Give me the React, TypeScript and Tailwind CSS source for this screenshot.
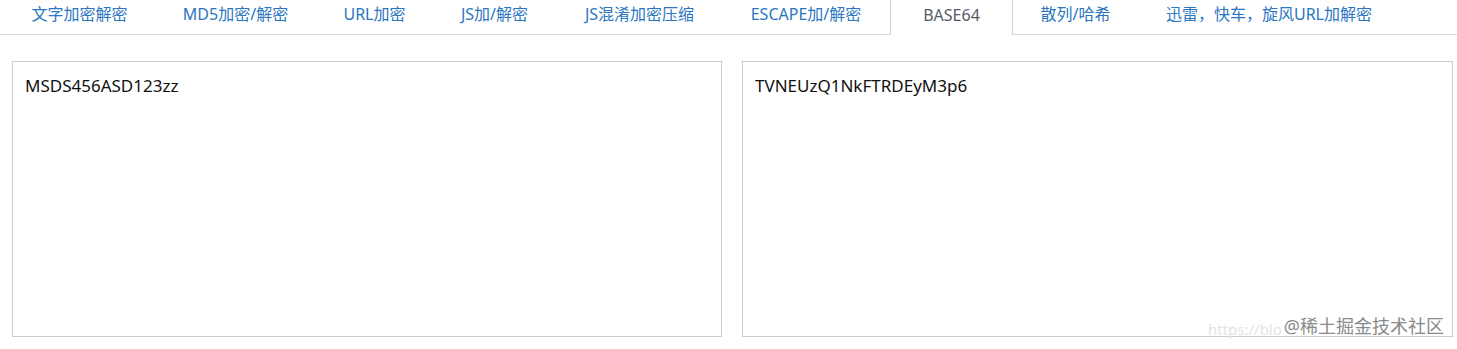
import { useState } from 'react'

const tabs = [
    { label: '文字加密解密', w: 'w-[149px]' },
    { label: 'MD5加密/解密', w: 'w-[163px]' },
    { label: 'URL加密', w: 'w-[115px]' },
    { label: 'JS加/解密', w: 'w-[125px]' },
    { label: 'JS混淆加密压缩', w: 'w-[165px]' },
    { label: 'ESCAPE加/解密', w: 'w-[168px]' },
    { label: 'BASE64', w: 'w-[123px]' },
    { label: '散列/哈希', w: 'w-[125px]' },
    { label: '迅雷，快车，旋风URL加解密', w: 'w-[262px]' },
]

const font = { fontFamily: '"Noto Sans", "Noto Sans CJK SC", sans-serif' }

export default function App() {
    const [active, setActive] = useState(6)
    const [input, setInput] = useState('MSDS456ASD123zz')

    const encoded = (() => {
        try {
            return btoa(input)
        } catch {
            return ''
        }
    })()

    return (
        <div className="relative w-[1457px] h-[349px] bg-white overflow-hidden" style={font}>
            {/* tab bar */}
            <div className="flex h-[35px] pl-[5px] border-b border-[#d9d9d9]">
                {tabs.map((t, i) => (
                    <button
                        key={t.label}
                        onClick={() => setActive(i)}
                        className={
                            i === active
                                ? `${t.w} h-[35px] text-center text-[16px] text-[#555b66] bg-white border-x border-[#d0d0d0] -mb-px whitespace-nowrap`
                                : `${t.w} h-[34px] text-center text-[16px] text-[#2b76c0] whitespace-nowrap`
                        }
                    >
                        <span className="relative -top-[3px]">{t.label}</span>
                    </button>
                ))}
            </div>

            {/* panels */}
            <div className="flex gap-[20px] pl-[12px] pr-[4px] pt-[26px]">
                <textarea
                    value={input}
                    onChange={e => setInput(e.target.value)}
                    className="w-[711px] h-[276px] resize-none border border-[#cccccc] px-[12px] py-[11px] text-[17px] text-[#111] outline-none"
                    style={font}
                />
                <textarea
                    value={encoded}
                    readOnly
                    className="w-[712px] h-[276px] resize-none border border-[#cccccc] px-[12px] py-[11px] text-[17px] text-[#111] outline-none"
                    style={font}
                />
            </div>

            {/* watermark */}
            <div className="absolute right-[13px] bottom-[9px] flex items-end gap-[2px] pointer-events-none">
                <span className="text-[15px] text-[#e4e4e4] whitespace-nowrap">https://blo</span>
                <span className="text-[18px] text-[#8a8a8a] whitespace-nowrap">@稀土掘金技术社区</span>
            </div>
        </div>
    )
}
